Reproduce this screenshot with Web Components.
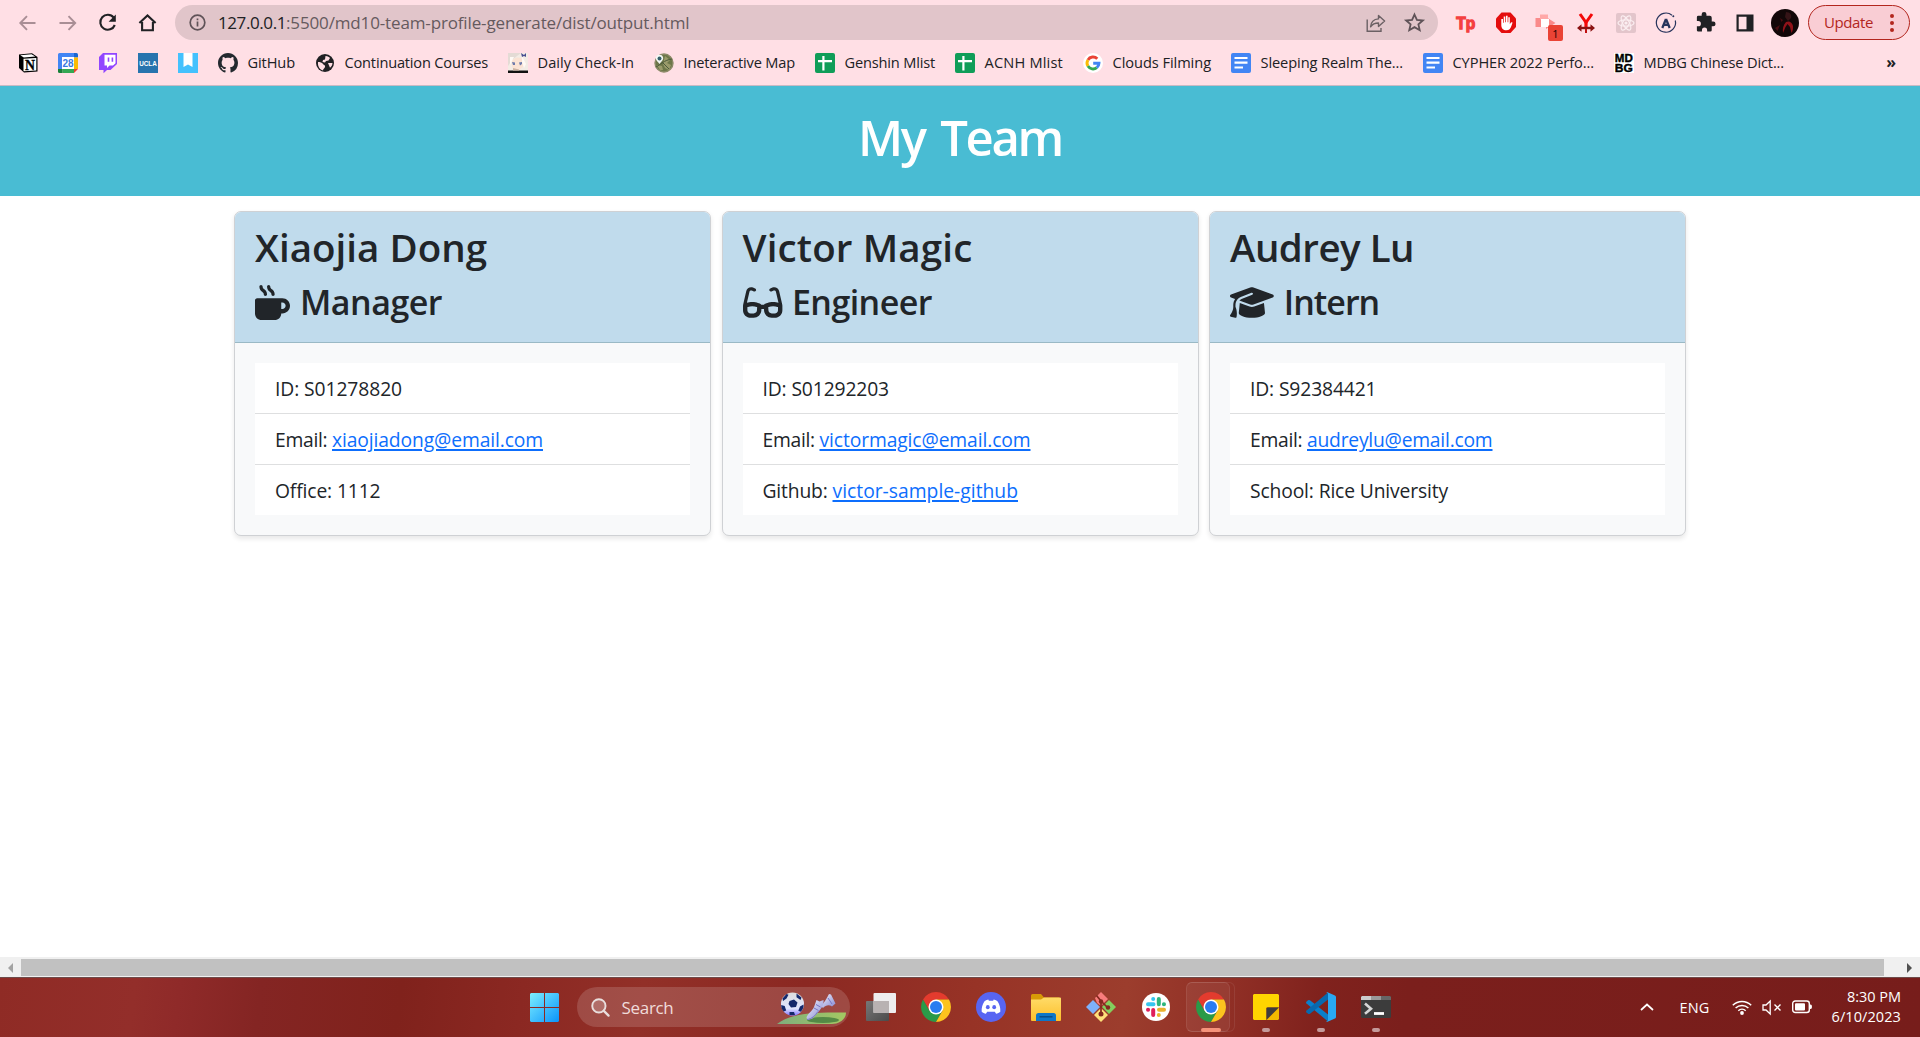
<!DOCTYPE html>
<html lang="en">
<head>
<meta charset="utf-8">
<title>My Team</title>
<style>
html,body{margin:0;height:100%;overflow:hidden}
body{font-family:"Open Sans","Noto Sans",sans-serif;color:#212529;background:#fff}
</style>
</head>
<body>
<app-window>
  <browser-toolbar></browser-toolbar>
  <bookmark-bar></bookmark-bar>
  <team-header><fit-text w="204">My Team</fit-text></team-header>
  <team-board>
    <profile-card>
      <fit-text slot="name" w="232">Xiaojia Dong</fit-text>
      <ui-icon slot="icon" name="mug" w="35" h="35"></ui-icon>
      <fit-text slot="role" w="142">Manager</fit-text>
      <profile-row><fit-text w="127">ID: S01278820</fit-text></profile-row>
      <profile-row><fit-text w="57">Email: </fit-text><profile-link><fit-text w="211">xiaojiadong@email.com</fit-text></profile-link></profile-row>
      <profile-row><fit-text w="105.5">Office: 1112</fit-text></profile-row>
    </profile-card>
    <profile-card>
      <fit-text slot="name" w="230">Victor Magic</fit-text>
      <ui-icon slot="icon" name="glasses" w="39.4" h="35"></ui-icon>
      <fit-text slot="role" w="140">Engineer</fit-text>
      <profile-row><fit-text w="126.5">ID: S01292203</fit-text></profile-row>
      <profile-row><fit-text w="57">Email: </fit-text><profile-link><fit-text w="211">victormagic@email.com</fit-text></profile-link></profile-row>
      <profile-row><fit-text w="70">Github: </fit-text><profile-link><fit-text w="185.5">victor-sample-github</fit-text></profile-link></profile-row>
    </profile-card>
    <profile-card>
      <fit-text slot="name" w="184">Audrey Lu</fit-text>
      <ui-icon slot="icon" name="cap" w="43.75" h="35"></ui-icon>
      <fit-text slot="role" w="95.5">Intern</fit-text>
      <profile-row><fit-text w="126.5">ID: S92384421</fit-text></profile-row>
      <profile-row><fit-text w="57">Email: </fit-text><profile-link><fit-text w="185.5">audreylu@email.com</fit-text></profile-link></profile-row>
      <profile-row><fit-text w="198">School: Rice University</fit-text></profile-row>
    </profile-card>
  </team-board>
  <scroll-track></scroll-track>
  <task-bar></task-bar>
</app-window>

<script>
const chromeLogo = `<path d="M24 4A20 20 0 0 0 6.7 14L15.3 29 24 24h0L24 14h17.3A20 20 0 0 0 24 4z" fill="#e33b2e"/><path d="M6.7 14A20 20 0 0 0 24 44L32.7 29 24 24 15.3 29z" fill="#2a9a48"/><path d="M41.3 14A20 20 0 0 1 24 44L32.7 29 24 14z" fill="#fcc31e"/><circle cx="24" cy="24" r="10" fill="#fff"/><circle cx="24" cy="24" r="8" fill="#2a7cf0"/>`;
const sheet = `<rect width="20" height="20" rx="2" fill="#0f9d58"/><path d="M3 8.2h14M8.4 3v14.5" stroke="#fff" stroke-width="2.2" fill="none"/>`;
const doc = `<rect width="20" height="20" rx="2" fill="#4285f4"/><path d="M3.5 5h13M3.5 9.6h13M3.5 14.5h8.5" stroke="#fff" stroke-width="2.2" fill="none"/>`;
const I = {
 back:['0 0 20 20','<path d="M17.500 10H3M9 3.2 2.3 10 9 16.8" fill="none" stroke="#a98e95" stroke-width="1.9"/>'],
 fwd:['0 0 20 20','<path d="M1.500 10h15M10.500 3.2 17.200 10 10.500 16.8" fill="none" stroke="#a98e95" stroke-width="1.9"/>'],
 reload:['0 0 20 20','<path d="M15.700 4.6A7.5 7.5 0 1 0 16.800 12" fill="none" stroke="#202124" stroke-width="2.1"/><path d="M17.800 1.6v7.2h-7.2z" fill="#202124"/>'],
 home:['0 0 20 20','<path d="M1.400 10 9.500 2.5 17.600 10M4.100 9v8.3h10.8V9" fill="none" stroke="#202124" stroke-width="2.1"/>'],
 info:['0 0 20 20','<circle cx="10" cy="10" r="8.6" fill="none" stroke="#5f5358" stroke-width="2"/><path d="M9 8.8h2v6H9zM9 5.2h2v2.1H9z" fill="#5f5358"/>'],
 share:['0 0 20 20','<path d="M1.2 6.5v11.8H15V15" fill="none" stroke="#6b6064" stroke-width="1.4"/><path d="M12.5 2.4 18.6 8l-6.1 5.4V10C8.600 10 6.500 11 4.600 13.800 5 9 8 6.200 12.500 5.900z" fill="none" stroke="#6b6064" stroke-width="1.4" stroke-linejoin="round"/>'],
 star:['0 0 20 20','<path d="M10 2.400 12.300 7.600 18 8.100 13.700 11.800 15 17.400 10 14.400 5 17.400 6.300 11.800 2 8.100 7.700 7.600z" fill="none" stroke="#5f5358" stroke-width="1.7"/>'],
 tp:['0 0 24 24','<path d="M2.500 3.300h12v3.900h-3.700v12H6.600v-12H2.500z" fill="none"/><text x="2.2" y="17.6" font-family="Liberation Sans" font-weight="700" font-size="17" fill="#f43f3f" stroke="#f43f3f" stroke-width="1.300" textLength="19" lengthAdjust="spacingAndGlyphs">Tp</text>'],
 hand:['0 0 24 24','<path d="M7.500 1.500h9l5.500 6v8.500l-5.500 6h-9l-5.500-6V7.500z" fill="#e40d0d"/><path d="M7.300 11.500v2.800c0 3 2 5 5 5s4-1.500 5.200-4.500l1.100-3.200-1.500-.4-1.300 2V6.200h-1.500v5h-.7V4.700h-1.600v6.500h-.7V5.500H9.700v6.200H9V8H7.300z" fill="#fff"/>'],
 flow:['0 0 24 24','<path d="M1.500 7h6v9h-6zM12 6l9.500 6-9.500 6z" fill="#fa8a8a"/><path d="M6 3.500h8v5H6z" fill="#ffa8a8"/><path d="M7 8h8v8H7z" fill="#fff"/>'],
 scissor:['0 0 24 24','<path d="M6 3l6 8.500L18 3" fill="none" stroke="#f30808" stroke-width="3"/><path d="M12 11v5" stroke="#f30808" stroke-width="3.200"/><path d="M5 17h14" stroke="#8a1212" stroke-width="2.400"/><path d="M3 17l4.500-3.800v7.600zM21 17l-4.500-3.800v7.600z" fill="#8a1212"/><path d="M12 18v4" stroke="#c01010" stroke-width="2"/>'],
 react:['0 0 24 24','<rect x="2" y="2" width="20" height="20" rx="2" fill="#e3c5cb"/><g fill="none" stroke="#fbeef1" stroke-width="1.200"><ellipse cx="12" cy="12" rx="8" ry="3.200"/><ellipse cx="12" cy="12" rx="8" ry="3.200" transform="rotate(60 12 12)"/><ellipse cx="12" cy="12" rx="8" ry="3.200" transform="rotate(120 12 12)"/></g><circle cx="12" cy="12" r="1.600" fill="#fbeef1"/>'],
 apollo:['0 0 24 24','<path d="M18 4.200A9.600 9.600 0 1 0 21.300 9.500" fill="none" stroke="#28345c" stroke-width="1.200"/><circle cx="19.300" cy="5.300" r="1" fill="#28345c"/><path d="M12 8 8.300 17M12 8l3.700 9M10 13.800h4" fill="none" stroke="#28345c" stroke-width="2.300"/>'],
 puzzle:['0 0 24 24','<path d="M20 11h-1.500V7a2 2 0 0 0-2-2H13V3.500a2.500 2.500 0 0 0-5 0V5H4.500a1.500 1.500 0 0 0-1.500 1.500v4h1.500a2.700 2.700 0 0 1 0 5.400H3V20a1.500 1.500 0 0 0 1.500 1.500h3.800V20a2.700 2.700 0 0 1 5.400 0v1.500h3.300a1.500 1.500 0 0 0 1.500-1.500v-4H20a2.500 2.500 0 0 0 0-5z" fill="#202124"/>'],
 panel:['0 0 24 24','<path d="M4.600 4.600h14.800v14.800H4.600z" fill="none" stroke="#202124" stroke-width="2.200"/><path d="M13.500 4h6v16h-6z" fill="#202124"/>'],
 avatar:['0 0 28 28','<circle cx="14" cy="14" r="14" fill="#120708"/><path d="M15 3c4 0 6 3 5 6l-3 3-3-4z" fill="#351417"/><path d="M15 13c3-1.500 6 0 7 4 .3 3-.3 5-1.500 7l-1.500-6-2.500-3-2 3-2.500 6c-.5-4 0-8 3-11z" fill="#8f1219"/><path d="M9 9l3 2-1.500 2zM4 19l5-3-2.500 6z" fill="#4a0d12"/>'],
 notion:['0 0 20 20','<path d="M1 1.500 14 .3l5.500 3.700v14.500L6 19.600 1 15z" fill="#000"/><path d="M2.300 2.200 13.500 1.200l3.800 2.400L5.800 4.500z" fill="#fff"/><path d="M5.500 5.700 18.300 4.900v12.500L5.500 18.300z" fill="#fff"/><text x="7" y="16.800" font-family="Liberation Serif" font-weight="700" font-size="14" fill="#000" stroke="#000" stroke-width=".3" textLength="10" lengthAdjust="spacingAndGlyphs">N</text>'],
 cal:['0 0 20 20','<path d="M0 1.500A1.500 1.500 0 0 1 1.500 0H16v4.500H4.500V16H0z" fill="#4285f4"/><path d="M16 0h2.500A1.500 1.500 0 0 1 20 1.500V4.500h-4z" fill="#1967d2"/><path d="M16 4.500h4V16h-4z" fill="#fbbc04"/><path d="M4.500 16H16v4H4.500z" fill="#34a853"/><path d="M0 16h4.500v4h-3A1.500 1.500 0 0 1 0 18.500z" fill="#188038"/><path d="M16 16h4l-4 4z" fill="#ea4335"/><path d="M4 4H16V16H4z" fill="#fff"/><text x="10.100" y="13.700" text-anchor="middle" font-family="Liberation Sans" font-weight="700" font-size="10" fill="#3a78e0">28</text>'],
 twitch:['0 0 20 20','<path d="M5 0 1 4v13h4.500v3.200L9 17h3.500l6.500-6V0z" fill="#9146ff"/><path d="M6.500 1.700h11v8.500L15 12.500h-3.500L9 15v-2.500H6.500z" fill="#fff"/><path d="M9.700 4.500h1.600v4.300H9.700zM13.600 4.500h1.600v4.300h-1.600z" fill="#9146ff"/>'],
 ucla:['0 0 20 20','<rect width="20" height="20" fill="#2774ae"/><text x="1.200" y="12.800" font-family="Liberation Sans" font-weight="700" font-size="7" fill="#fff" textLength="17.600" lengthAdjust="spacingAndGlyphs">UCLA</text>'],
 mark:['0 0 20 20','<rect width="20" height="20" fill="#44c1fd"/><path d="M5.500 0h9v14l-4.500-2.500L5.500 14z" fill="#fff"/>'],
 github:['0 0 16 16','<path fill="#24292f" d="M8 0C3.580 0 0 3.580 0 8c0 3.540 2.290 6.530 5.470 7.590.4.070.55-.17.55-.38 0-.19-.01-.82-.01-1.490-2.010.37-2.530-.49-2.690-.94-.09-.23-.48-.94-.82-1.130-.28-.15-.68-.52-.01-.53.63-.01 1.080.58 1.230.82.72 1.210 1.870.87 2.330.66.07-.52.28-.87.51-1.070-1.780-.2-3.640-.89-3.640-3.950 0-.87.31-1.590.82-2.150-.08-.2-.36-1.020.08-2.120 0 0 .67-.21 2.200.82.64-.18 1.320-.27 2-.27s1.360.09 2 .27c1.530-1.040 2.200-.82 2.200-.82.44 1.100.16 1.920.08 2.120.51.56.82 1.270.82 2.150 0 3.070-1.870 3.750-3.650 3.950.29.25.54.73.54 1.480 0 1.070-.01 1.930-.01 2.200 0 .21.15.46.55.38A8.010 8.010 0 0 0 16 8c0-4.420-3.580-8-8-8z"/>'],
 globe:['0 0 20 20','<circle cx="10" cy="10" r="9" fill="#202124"/><path d="M3 9c2 0 4 .5 5 2s2.500 1 2 3-2 1.500-2 3.500C5 16.800 2.500 13.500 3 9zM10.500 3c2.500 0 3.500 1 4.500 2l-1.500 2.500-2.500.5-1 1.500-2.500-.5.500-2 2-.500z" fill="#ffdfe5"/><path d="M13 10h4.500c-.2 2-1 3.500-2.500 4.700z" fill="#ffdfe5"/>'],
 anime:['0 0 20 20','<rect width="20" height="20" fill="#f3ece5"/><path d="M0 0h13L9 3 4 7 0 13z" fill="#e4dbd5"/><path d="M4 8c2-4 8-5 11-1l1 6-5 4H7l-3-3z" fill="#fbe3d4"/><path d="M4 9l3 .5v2.500H5zM11 9.500l3-.5v2l-2 1.500z" fill="#6d7bab"/><path d="M2 4l4 0-4 8zM14 3l4 8-2 4-2-6z" fill="#fffaf5"/><path d="M13 0l3 2 2-2v4l-2-1-2 1z" fill="#474f91"/><path d="M0 17.500h20V20H0z" fill="#111"/><path d="M5 15l6 1.500v1H5z" fill="#cdb3a2"/>'],
 map:['0 0 20 20','<circle cx="10" cy="10" r="9" fill="#6d7749" stroke="#8c8a68" stroke-width="1.400"/><path d="M11 3l5 4-3 3 4 2-2 5-4-2-2-4zM3 12l5 1 1 4-3 0z" fill="#9a9b6b"/><path d="M2 14c4-2 8-7 16-8M4 5l11 11" stroke="#4c5a3b" fill="none"/><path d="M5.500 1.800c2.500 0 3.700 1.700 3.700 3.500 0 2.200-2.400 3.700-3.700 5.700-1.300-2-3.700-3.500-3.700-5.700 0-1.800 1.300-3.500 3.700-3.500z" fill="#f4f8f5"/><circle cx="5.500" cy="5.400" r="2" fill="#35606a"/>'],
 sheet:['0 0 20 20',sheet], doc:['0 0 20 20',doc],
 google:['0 0 20 20','<circle cx="10" cy="10" r="10" fill="#fff"/><g fill="none" stroke-width="2.900"><path d="M14.300 5.800A6 6 0 0 0 4.900 6.900" stroke="#ea4335"/><path d="M4.900 6.900a6 6 0 0 0 0 6.200" stroke="#fbbc05"/><path d="M4.900 13.100a6 6 0 0 0 8.900 1.500" stroke="#34a853"/><path d="M13.800 14.600A6 6 0 0 0 16 10.200H10.200" stroke="#4285f4"/></g>'],
 mdbg:['0 0 20 20','<rect x="0" width="20" height="20" fill="#fff"/><g font-family="Liberation Sans" font-weight="700" font-size="11.500" fill="#000" stroke="#000" stroke-width=".4"><text x=".8" y="9.200" textLength="18" lengthAdjust="spacingAndGlyphs">MD</text><text x=".8" y="19" textLength="18" lengthAdjust="spacingAndGlyphs">BG</text></g>'],
 mug:['0 0 512 512','<path fill="#212529" d="M88 0C74.700 0 64 10.700 64 24c0 38.900 23.400 59.400 39.100 73.100l1.100 1C120.500 112.300 128 119.900 128 136c0 13.300 10.700 24 24 24s24-10.700 24-24c0-38.900-23.400-59.400-39.100-73.100l-1.100-1C119.500 47.700 112 40.100 112 24c0-13.300-10.700-24-24-24zM32 192c-17.700 0-32 14.300-32 32V416c0 53 43 96 96 96H288c53 0 96-43 96-96h16c61.900 0 112-50.100 112-112s-50.100-112-112-112H352 32zm352 64h16c26.500 0 48 21.500 48 48s-21.500 48-48 48H384V256zM224 24c0-13.300-10.700-24-24-24s-24 10.700-24 24c0 38.900 23.400 59.400 39.100 73.100l1.100 1C232.500 112.300 240 119.900 240 136c0 13.300 10.700 24 24 24s24-10.700 24-24c0-38.900-23.400-59.400-39.100-73.100l-1.100-1C231.500 47.700 224 40.100 224 24z"/>'],
 glasses:['0 0 576 512','<path fill="#212529" d="M118.600 80c-11.500 0-21.400 7.900-24 19.100L57 260.300c20.500-6.200 48.300-12.300 78.700-12.300c32.300 0 61.800 6.900 82.800 13.500c10.600 3.300 19.300 6.700 25.400 9.200c3.100 1.300 5.500 2.400 7.300 3.200c7 3 13 8 16.500 14.100h40.600c3.100-5.300 7.700-9.800 13.500-12.700c3-1.500 6-2.900 10.200-4.600c6.100-2.600 14.800-5.900 25.400-9.200c21-6.600 50.400-13.500 82.800-13.500c30.400 0 58.200 6.100 78.700 12.300L481.400 99.100c-2.600-11.200-12.600-19.100-24-19.100c-3.100 0-6.200 .6-9.200 1.800L416.900 94.300c-12.300 4.900-26.300-1.100-31.200-13.400s1.100-26.300 13.400-31.200l31.300-12.500c8.600-3.400 17.700-5.200 27-5.200c33.800 0 63.100 23.300 70.800 56.200l43.900 188c1.700 7.300 2.900 14.700 3.500 22.100c.3 1.900 .5 3.800 .5 5.700v64c0 61.900-50.100 112-112 112H419.700c-59.400 0-108.500-46.400-111.800-105.800L306.600 352H269.400l-1.200 22.200C264.900 433.600 215.800 480 156.300 480H112C50.100 480 0 429.900 0 368V304c0-1.900 .2-3.800 .5-5.700c.6-7.400 1.800-14.800 3.500-22.100l43.900-188C55.500 55.300 84.800 32 118.600 32c9.200 0 18.400 1.800 27 5.200l31.300 12.500c12.300 4.900 18.300 18.900 13.400 31.200s-18.900 18.300-31.200 13.400L127.800 81.800c-2.900-1.200-6-1.800-9.200-1.800zM64 325.400V368c0 26.500 21.500 48 48 48h44.300c25.500 0 46.500-19.900 47.900-45.300l2.500-45.600c-2.300-.8-4.900-1.700-7.500-2.500c-17.200-5.400-39.900-10.500-63.600-10.500c-23.700 0-46.200 5.100-63.200 10.500c-3.100 1-5.900 1.900-8.500 2.900zM512 368V325.400c-2.600-.9-5.500-1.900-8.500-2.900c-17-5.400-39.500-10.500-63.200-10.500c-23.700 0-46.400 5.100-63.600 10.500c-2.700 .8-5.200 1.700-7.500 2.500l2.500 45.600c1.400 25.400 22.500 45.300 47.900 45.300H464c26.500 0 48-21.500 48-48z"/>'],
 cap:['0 0 640 512','<path fill="#212529" d="M320 32c-8.100 0-16.100 1.400-23.700 4.100L15.800 137.400C6.300 140.900 0 149.900 0 160s6.300 19.100 15.800 22.600l57.900 20.900C57.300 229.300 48 259.800 48 291.900v28.100c0 28.400-10.800 57.700-22.300 80.800c-6.500 13-13.900 25.800-22.500 37.600C0 442.700-.9 448.300 .9 453.400s6 8.900 11.200 10.200l64 16c4.200 1.100 8.700 .3 12.400-2s6.300-6.100 7.100-10.400c8.600-42.800 4.300-81.200-2.100-108.700C90.300 344.300 86 329.800 80 316.500V291.900c0-30.200 10.200-58.700 27.900-81.500c12.900-15.500 29.600-28 49.200-35.700l157-61.700c8.200-3.200 17.500 .8 20.700 9s-.8 17.500-9 20.700l-157 61.700c-12.400 4.900-23.300 12.400-32.200 21.600l159.600 57.600c7.600 2.700 15.600 4.100 23.700 4.100s16.100-1.400 23.700-4.100L624.200 182.600c9.500-3.400 15.800-12.500 15.800-22.600s-6.300-19.100-15.800-22.600L343.700 36.100C336.100 33.400 328.100 32 320 32zM128 408c0 35.300 86 72 192 72s192-36.700 192-72L496.700 262.600 354.500 314c-11.100 4-22.800 6-34.500 6s-23.500-2-34.500-6L143.300 262.600 128 408z"/>'],
 win:['0 0 29 29','<defs><linearGradient id="w" gradientUnits="userSpaceOnUse" x1="0" y1="0" x2="29" y2="29"><stop stop-color="#7defff"/><stop offset="1" stop-color="#0a93fb"/></linearGradient></defs><path fill="url(#w)" d="M1 0h13v14H0V1zM15 0h13l1 1v13H15zM0 15h14v14H1l-1-1zM15 15h14v13l-1 1H15z"/>'],
 glass:['0 0 20 20','<circle cx="8.300" cy="8.300" r="7" fill="#ffffff30" stroke="#e9dedd" stroke-width="2"/><path d="M13.500 13.500l5 5" stroke="#e9dedd" stroke-width="2.400" stroke-linecap="round"/>'],
 sport:['0 0 70 34','<defs><linearGradient id="g" x1="0" x2="1"><stop stop-color="#7fae7d"/><stop offset="1" stop-color="#a3c862"/></linearGradient><linearGradient id="s" x1="0" x2="1" y2="1"><stop stop-color="#f3f5ff"/><stop offset="1" stop-color="#8285d0"/></linearGradient><linearGradient id="b" x2="0" y2="1"><stop stop-color="#ddd"/><stop offset=".7" stop-color="#dfe3ff"/><stop offset="1" stop-color="#8378ff"/></linearGradient></defs><path d="M0 32C14 21 38 20 69 20.500c0 7-7 11.500-14 11.500z" fill="url(#g)"/><ellipse cx="46" cy="28" rx="16" ry="3" fill="#3d7839" opacity=".75"/><circle cx="15.500" cy="12" r="11.500" fill="url(#b)"/><path d="M12.500 9l4.500-1.500 3.500 3-1.500 4.500-5 .5-2.500-3.500zM5.500 6.500l4-4.500 2 .8-2 3.600-3.500 2.600zM19.500 1.500l5 4-1 2.500-4-2.700zM4.200 13l3.500 1 1.500 4.500-2.500 1C5 17.500 4.200 16 4.200 13zM23 14.500l3.500-2c.5 3-1 5.500-2.700 7.300l-2.500-1zM12.500 20l4.500 0 1 3h-5.500z" fill="#14286b"/><path d="M44 14c3-3 5.500-7 8-12l2 .5 4.500 9-3.500 3c-3-2-6-1.500-9 1.500z" fill="url(#s)"/><path d="M29.500 26c.5-4 6-7 7.500-11l2.500-7 3 1.500 4-1.500c.5 6-3 9-6 13l-5 5.500-4.500 1.500z" fill="url(#s)"/><path d="M30 27.500c5-.5 8-4 11-8M37 16l4.500 2.500M39 12.500l4.500 2.500M51 6l4 6" stroke="#7675c5" fill="none"/>'],
 tasks:['0 0 30 28','<defs><linearGradient id="t" x2="1" y2="1"><stop stop-color="#777"/><stop offset="1" stop-color="#4b4b4b"/></linearGradient></defs><rect y="8" width="23" height="20" rx="1" fill="url(#t)"/><rect x="7.500" width="22.500" height="20" rx="1" fill="#eeedee"/><path d="M7.500 8H23v12H7.500z" fill="#b8b2b2"/>'],
 chrome:['4 4 40 40',chromeLogo],
 discord:['0 0 30 30','<circle cx="15" cy="15" r="15" fill="#5865f2"/><path d="M10 8.200l2.300-.6.6 1.100h4.200l.6-1.100 2.300.6 1.700 1.200c2 3.300 2.900 6.600 2.600 10.300-1.300 1.100-2.600 1.600-4.200 2l-1.300-2h-7.600l-1.300 2c-1.600-.4-2.900-.9-4.200-2-.3-3.700.6-7 2.600-10.300z" fill="#fff"/><ellipse cx="11.800" cy="15.200" rx="1.900" ry="2.100" fill="#5865f2"/><ellipse cx="18.200" cy="15.200" rx="1.900" ry="2.100" fill="#5865f2"/>'],
 folder:['0 0 30 27','<path d="M0 1.500Q0 0 1.500 0H10l3 3.500H28l1 3v10H0z" fill="#d79a07"/><defs><linearGradient id="f" x2="0" y2="1"><stop stop-color="#ffdb68"/><stop offset="1" stop-color="#fdbf2b"/></linearGradient></defs><path d="M0 5.500h10L13 3.500h16q1 0 1 1V26q0 1-1 1H1q-1 0-1-1z" fill="url(#f)"/><path d="M5 27v-5.500Q5 19 7.500 19h15q2.500 0 2.500 2.500V27z" fill="#0d76c8"/><path d="M8.500 22.800h13" stroke="#074a86" stroke-width="1.400"/>'],
 git:['0 0 30 30','<path d="M15 0l7 7-7 7-4-3-2-5z" fill="#f87c7c"/><path d="M7 8l7 7-7 7-7-7z" fill="#7eb1fb"/><path d="M23 8l7 7-7 7-7-7z" fill="#83cf5e"/><path d="M15 16l7 7-7 7-7-7z" fill="#ffe07a"/><path d="M10.500 3.500 15 9v15M15 9l7 7M15 9v13" stroke="#84281f" stroke-width="1.700" fill="none"/><circle cx="15" cy="9.500" r="2.200" fill="#84281f"/><circle cx="22" cy="15.500" r="2.200" fill="#84281f"/><circle cx="15" cy="22" r="2.500" fill="#84281f"/>'],
 slack:['0 0 28 28','<circle cx="14" cy="14" r="14" fill="#fff"/><g stroke-width="4" stroke-linecap="round"><path d="M6 11.200h5.500M11.200 5.900v.1" stroke="#36c5f0"/><path d="M16.800 6v5.200M21.900 11.200h.1" stroke="#2eb67d"/><path d="M17 16.800h5M16.800 22v.1" stroke="#ecb22e"/><path d="M11.200 17v5M6 16.800h.1" stroke="#e01e5a"/></g>'],
 sticky:['0 0 26 26','<path d="M1 0h24l1 1v12.500H13.500V26H1l-1-1V1z" fill="#ffd500"/><path d="M13.500 26V14.500l1-1H26z" fill="#3d3d3d"/><path d="M26 13.500V25l-1 1H13.500z" fill="#f2b900"/>'],
 code:['0 0 30 30','<path d="M.4 9.700 2 8.300q1-.6 2 0L22 22.500V29.500L.5 11.500q-.9-.9-.1-1.800z" fill="#0a7fcb"/><path d="M.4 20.300 2 21.700q1 .6 2 0L22 7.500V.5L.5 18.500q-.9.900-.1 1.800z" fill="#0869af"/><path d="M21.500.3 29 3.600q1 .5 1 1.500v19.800q0 1-1 1.500l-7.500 3.300q-.8.300-1.500-.5 2 .5 2-1.200V2q0-1.700-2-1.200.7-.8 1.500-.5z" fill="#29a8f3"/>'],
 term:['0 0 30 22','<rect width="30" height="22" rx="1.500" fill="#3c3c3c"/><path d="M1 0h9v4H0V1z" fill="#ccc"/><path d="M10 0h10v4H10z" fill="#999"/><path d="M20 0h9l1 1v3H20z" fill="#666"/><path d="M4 7.500l6 5.300-6 5" stroke="#d6d6d6" stroke-width="2.600" fill="none"/><path d="M13 17.500h10" stroke="#fff" stroke-width="2.800"/>'],
 up:['0 0 14 8','<path d="M1 7l6-5.500L13 7" fill="none" stroke="#fff" stroke-width="1.700"/>'],
 wifi:['0 0 20 15','<g fill="none" stroke="#fff" stroke-width="1.500"><path d="M.8 5.200a13.200 13.200 0 0 1 18.400 0M3.600 8a9.300 9.300 0 0 1 12.800 0M6.300 10.800a5.400 5.400 0 0 1 7.400 0"/></g><circle cx="10" cy="13" r="1.900" fill="#fff"/>'],
 mute:['0 0 20 15','<path d="M1 5h3l4.200-4v13L4 10H1z" fill="none" stroke="#fff" stroke-width="1.300"/><path d="M12.500 4.500l6 6M18.500 4.500l-6 6" stroke="#fff" stroke-width="1.400"/>'],
 battery:['0 0 20 14','<rect x=".7" y="1" width="16.600" height="11.500" rx="2.500" fill="none" stroke="#fff" stroke-width="1.400"/><rect x="3" y="3.200" width="10" height="7.200" rx="1" fill="#fff"/><path d="M18 4.500h.5q1.500 0 1.500 2.200t-1.500 2.300H18z" fill="#fff"/>']
};
I.tp[1] = I.tp[1].replace(/^<path[^>]*>/, '');

function component(name, html, setup) {
  const tpl = document.createElement('template');
  tpl.innerHTML = html;
  customElements.define(name, class extends HTMLElement {
    connectedCallback() {
      if (this.shadowRoot) return;
      this.attachShadow({mode: 'open'}).append(tpl.content.cloneNode(true));
      if (setup) setup(this, this.shadowRoot);
    }
  });
}

component('app-window', `<style>:host{display:flex;flex-direction:column;width:1920px;height:1037px;overflow:hidden}</style><slot></slot>`);

component('browser-toolbar', `<style>
:host{display:flex;align-items:center;height:45px;box-sizing:border-box;padding-left:18px;background:#ffdfe5;color:#202124}
nav{display:flex;gap:20px;margin-right:17px}
.omni{display:flex;align-items:center;width:1263px;height:35px;margin:0 16px 0 0;padding:0 13px 0 14px;box-sizing:border-box;border-radius:18px;background:#e1c5ca;font-size:17px}
.url{display:flex;flex:1;margin-left:12px;white-space:pre}.rest{color:#655a5e}
.omni .share{margin-right:18px}
.ext{display:flex;align-items:center;gap:16px}
.badged{position:relative;display:flex}
.badge{position:absolute;left:14px;top:14px;width:15px;height:16px;border-radius:2px;background:#ea4335;color:#200;font:11px/17px "Open Sans",sans-serif;text-align:center}
.me{margin-left:14px}
.update{display:flex;align-items:center;justify-content:space-between;width:102px;height:35px;margin-left:9px;padding:0 15px 0 15px;box-sizing:border-box;border:1.500px solid #b3261e;border-radius:18px;background:#f9cdd4;color:#b3261e;font-size:15px}
.update fit-text{margin-top:-1px}
.dots{display:flex;flex-direction:column;gap:3px}.dots i{width:4px;height:4px;border-radius:50%;background:#b3261e}
</style>
<nav><ui-icon name="back" w="20" h="20"></ui-icon><ui-icon name="fwd" w="20" h="20"></ui-icon><ui-icon name="reload" w="20" h="20"></ui-icon><ui-icon name="home" w="20" h="20"></ui-icon></nav>
<div class="omni"><ui-icon name="info" w="17" h="17"></ui-icon><div class="url"><fit-text w="68">127.0.0.1</fit-text><fit-text class="rest" w="403.5">:5500/md10-team-profile-generate/dist/output.html</fit-text></div><ui-icon class="share" name="share" w="20" h="20"></ui-icon><ui-icon name="star" w="21" h="21"></ui-icon></div>
<div class="ext"><ui-icon name="tp" w="24" h="24"></ui-icon><ui-icon name="hand" w="24" h="24"></ui-icon><span class="badged"><ui-icon name="flow" w="24" h="24"></ui-icon><span class="badge">1</span></span><ui-icon name="scissor" w="24" h="24"></ui-icon><ui-icon name="react" w="24" h="24"></ui-icon><ui-icon name="apollo" w="24" h="24"></ui-icon><ui-icon name="puzzle" w="23" h="23"></ui-icon><ui-icon name="panel" w="24" h="24"></ui-icon></div>
<ui-icon class="me" name="avatar" w="28" h="28"></ui-icon>
<div class="update"><fit-text w="49">Update</fit-text><span class="dots"><i></i><i></i><i></i></span></div>`);

component('bookmark-bar', `<style>:host{display:flex;align-items:center;gap:20px;height:41px;box-sizing:border-box;padding:0 24px 4px 18px;border-bottom:1px solid #c9bac4;background:#ffdfe5;color:#202124;font-size:14.600px}.more{margin:-3px 0 0 auto;font-weight:700;font-size:16px;line-height:20px}</style>
<bookmark-item icon="notion"></bookmark-item><bookmark-item icon="cal"></bookmark-item><bookmark-item icon="twitch"></bookmark-item><bookmark-item icon="ucla"></bookmark-item><bookmark-item icon="mark"></bookmark-item>
<bookmark-item icon="github" w="48">GitHub</bookmark-item>
<bookmark-item icon="globe" w="144">Continuation Courses</bookmark-item>
<bookmark-item icon="anime" w="97">Daily Check-In</bookmark-item>
<bookmark-item icon="map" w="112">Ineteractive Map</bookmark-item>
<bookmark-item icon="sheet" w="91">Genshin Mlist</bookmark-item>
<bookmark-item icon="sheet" w="79">ACNH Mlist</bookmark-item>
<bookmark-item icon="google" w="99">Clouds Filming</bookmark-item>
<bookmark-item icon="doc" w="143">Sleeping Realm The...</bookmark-item>
<bookmark-item icon="doc" w="142">CYPHER 2022 Perfo...</bookmark-item>
<bookmark-item icon="mdbg" w="141">MDBG Chinese Dict...</bookmark-item>
<span class="more">»</span>`);

component('bookmark-item', `<style>:host{display:flex;align-items:center;flex:none;height:20px;line-height:20px}.icon{display:flex}.label{display:flex;margin:-2px 0 0 9.500px}.label[hidden]{display:none}</style><span class="icon"></span><span class="label"></span>`, (el, root) => {
  root.querySelector('.icon').innerHTML = `<ui-icon name="${el.getAttribute('icon')}" w="20" h="20"></ui-icon>`;
  const label = root.querySelector('.label');
  if (el.hasAttribute('w')) label.innerHTML = `<fit-text w="${el.getAttribute('w') - .5}">${el.textContent}</fit-text>`;
  else label.hidden = true;
});

component('team-header', `<style>:host{display:flex;align-items:center;justify-content:center;height:110px;box-sizing:border-box;padding-bottom:8px;background:#49bcd3;color:#fff}h1{margin:0;font-size:49px;line-height:60px;font-weight:600;word-spacing:5px}</style><h1><slot></slot></h1>`);

component('team-board', `<style>:host{display:flex;flex:1;align-items:flex-start;gap:10.500px;padding:15px 234px 0}</style><slot></slot>`);

component('profile-card', `<style>
:host{display:flex;flex-direction:column;flex:1 1 0;height:325px;box-sizing:border-box;border:1px solid #cfd1d4;border-radius:7px;background:#f8f9fa;box-shadow:0 2.500px 5px rgba(0,0,0,.09);overflow:hidden}
header{height:131px;box-sizing:border-box;padding:11px 20px 0;background:#c0dbec;border-bottom:1px solid #9ab9c5}
h2,h3{margin:0;font-weight:600}
h2{font-size:38.500px;line-height:48px;margin-bottom:10px}
h3{display:flex;align-items:center;gap:10px;font-size:34px;line-height:42px}
ul{margin:20px;padding:0;display:flex;flex-direction:column;background:#fff}
</style><header><h2><slot name="name"></slot></h2><h3><slot name="icon"></slot><slot name="role"></slot></h3></header><ul><slot></slot></ul>`);

component('profile-row', `<style>:host{display:flex;align-items:center;height:51px;box-sizing:border-box;padding:2px 20px 0;border-bottom:1px solid #dedfe0;font-size:19.300px;line-height:30px;white-space:pre}:host(:last-child){height:50px;border-bottom:0}</style><slot></slot>`);
component('profile-link', `<style>:host{display:flex;--line:underline}a{display:flex;color:#0d6efd}</style><a><slot></slot></a>`);

component('scroll-track', `<style>:host{display:flex;align-items:center;height:20px;box-sizing:border-box;padding:2px 8px 1px;background:#f0f0f0}i{width:0;height:0;border:5px solid transparent}.l{border-right-color:#a3a3a3;border-left:0}.r{border-left-color:#505050;border-right:0}.thumb{width:1863px;height:17px;margin:0 23px 0 8px;background:#c1c1c1}</style><i class="l"></i><div class="thumb"></div><i class="r"></i>`);

component('task-bar', `<style>
:host{display:flex;align-items:center;height:60px;box-sizing:border-box;padding:0 19px 0 530px;color:#fff;box-shadow:inset 0 1px #6d4b4a;background:linear-gradient(97deg,#8f2b25 0,#932e2a 135px,#8f2a29 180px,#842523 260px,#80221c 400px,#8b2822 520px,#923028 640px,#8b2822 800px,#973326 970px,#9c3d2d 1120px,#8f2e25 1230px,#80221d 1310px,#7b1f1c 1400px,#771d1b 100%)}
.search{display:flex;align-items:center;width:273px;height:40px;box-sizing:border-box;margin:0 3.500px 0 18px;padding:0 3px 0 14px;border-radius:20px;background:#ffffff26;color:#f0dcda;font-size:17px}
.search fit-text{margin:0 auto 0 11.500px}
.search .sport{margin-top:3px}
.apps{display:flex}
.app{display:flex;position:relative;width:55px;height:50px;align-items:center;justify-content:center}
.app.on::before,.app.on::after{content:"";position:absolute;top:0;left:2.500px;width:42px;height:48px;border:1px solid #ffffff14;border-radius:6px;background:#ffffff10}
.app.on::after{width:47px;border-left-color:transparent;background:none}
.app ui-icon{position:relative}
.app b{position:absolute;z-index:1;bottom:0;width:8px;height:4px;border-radius:2px;background:#c49a9a}
.app.on b{width:20px;background:#f5937b}
.tray{display:flex;align-items:center;margin-left:auto;font-size:14.500px}
.clock{display:flex;flex-direction:column;align-items:flex-end;margin-left:20px;line-height:20px;margin-top:-1px}
</style>
<ui-icon name="win" w="29" h="29"></ui-icon>
<div class="search"><ui-icon name="glass" w="19" h="19"></ui-icon><fit-text w="52">Search</fit-text><ui-icon class="sport" name="sport" w="70" h="34"></ui-icon></div>
<div class="apps"></div>
<div class="tray"><ui-icon name="up" w="14" h="8"></ui-icon><fit-text w="30" style="margin:0 22px 0 26px">ENG</fit-text><ui-icon name="wifi" w="20" h="15"></ui-icon><ui-icon name="mute" w="20" h="15" style="margin:0 10px"></ui-icon><ui-icon name="battery" w="20" h="14"></ui-icon><div class="clock"><fit-text w="54">8:30 PM</fit-text><fit-text w="69.5">6/10/2023</fit-text></div></div>`, (el, root) => {
  root.querySelector('.apps').innerHTML = [['tasks',30,28],['chrome',30,30],['discord',30,30],['folder',30,27],['git',30,30],['slack',28,28],['chrome',30,30,'on'],['sticky',26,26,'run'],['code',30,30,'run'],['term',30,22,'run']]
    .map(([n,w,h,s]) => `<div class="app ${s||''}"><ui-icon name="${n}" w="${w}" h="${h}"></ui-icon>${s?'<b></b>':''}</div>`).join('');
});

component('ui-icon', `<style>:host{display:inline-flex;flex:none}svg{display:block;overflow:visible}</style>`, (el, root) => {
  const [box, body] = I[el.getAttribute('name')];
  root.innerHTML += `<svg viewBox="${box}" width="${el.getAttribute('w')}" height="${el.getAttribute('h')}">${body}</svg>`;
});

// Spreads its text over a fixed advance width by adjusting letter spacing.
component('fit-text', `<style>:host{display:inline-block;white-space:pre}span{display:inline-block;text-decoration:var(--line,none);text-decoration-thickness:2px;text-underline-offset:2px}</style><span></span>`, (el, root) => {
  const span = root.querySelector('span'), w = +el.getAttribute('w');
  span.textContent = el.textContent;
  const gap = (w - span.getBoundingClientRect().width) / el.textContent.length;
  span.style.letterSpacing = gap + 'px';
  el.style.width = w + 'px';
});
</script>
</body>
</html>
